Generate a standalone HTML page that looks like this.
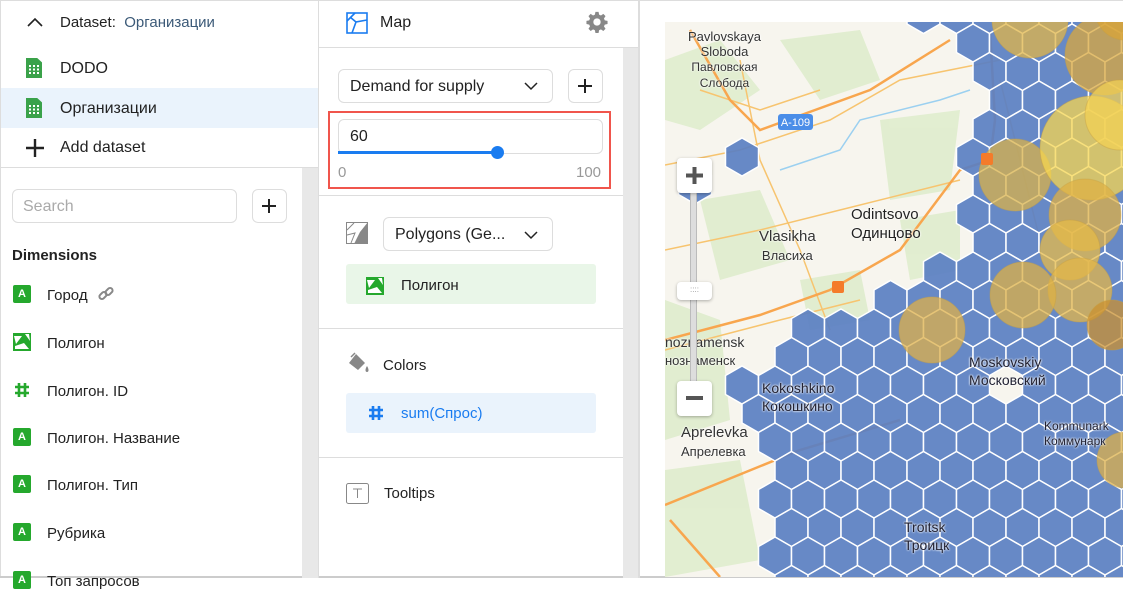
<!DOCTYPE html>
<html><head><meta charset="utf-8"><style>
*{box-sizing:border-box;margin:0;padding:0}
body{width:1123px;height:578px;overflow:hidden;background:#fff;font-family:"Liberation Sans","DejaVu Sans",sans-serif;color:#222;position:relative;font-size:15px}
.abs{position:absolute}
.row{position:absolute;left:0;display:flex;align-items:center}
.row span{position:relative;top:1px}
.sheet{width:16px;height:20px;background:#3aa24a;clip-path:polygon(0 0,70% 0,100% 22%,100% 100%,0 100%);position:relative}
.sheet:after{content:"";position:absolute;left:3px;top:7px;width:10px;height:9px;background:repeating-linear-gradient(90deg,#fff 0 2px,transparent 2px 4px);-webkit-mask:repeating-linear-gradient(0deg,#000 0 2px,transparent 2px 3.5px)}
.A{width:18px;height:18px;background:#25a82d;border-radius:2px;color:#fff;font-size:11px;font-weight:bold;display:flex;align-items:center;justify-content:center}
.box{position:absolute;border:1px solid #ddd;border-radius:6px;background:#fff}
.lbl{position:absolute;font-size:15px;color:#333;white-space:nowrap;text-shadow:0 0 2px #fff,0 0 2px #fff}
</style></head><body>
<div class="abs" style="left:0;top:0;width:1123px;height:1px;background:#ddd"></div>
<div class="abs" style="left:0;top:0;width:1px;height:578px;background:#ddd"></div>
<div class="abs" style="left:0;top:576px;width:1123px;height:2px;background:#ccc"></div>

<svg class="abs" style="left:26px;top:16px" width="18" height="12"><path d="M2 10 L9 3 L16 10" fill="none" stroke="#222" stroke-width="1.6"/></svg>
<div class="abs" style="left:60px;top:14px;font-size:15px">Dataset:&nbsp; <span style="color:#3c5a78">Организации</span></div>
<div class="row" style="top:58px;height:20px"><div class="sheet" style="margin-left:26px"></div><span style="margin-left:18px;font-size:16px">DODO</span></div>
<div class="abs" style="left:1px;top:88px;width:317px;height:40px;background:#eaf3fc"></div>
<div class="row" style="top:98px;height:20px"><div class="sheet" style="margin-left:26px"></div><span style="margin-left:18px;font-size:16px">Организации</span></div>
<svg class="abs" style="left:25px;top:138px" width="20" height="20"><path d="M10 1V19M1 10H19" stroke="#222" stroke-width="2.4"/></svg>
<div class="abs" style="left:60px;top:139px;font-size:16px">Add dataset</div>
<div class="abs" style="left:1px;top:167px;width:317px;height:1px;background:#ddd"></div>
<div class="abs" style="left:302px;top:168px;width:16px;height:410px;background:#e8e8e8"></div>
<div class="box" style="left:12px;top:189px;width:225px;height:34px"></div>
<div class="abs" style="left:23px;top:198px;color:#aaa;font-size:16px">Search</div>
<div class="box" style="left:252px;top:189px;width:35px;height:34px"></div>
<svg class="abs" style="left:262px;top:199px" width="14" height="14"><path d="M7 0V14M0 7H14" stroke="#222" stroke-width="2"/></svg>
<div class="abs" style="left:12px;top:247px;font-weight:bold;font-size:15px">Dimensions</div>
<div class="row" style="top:285px;height:18px"><div class="A" style="margin-left:13px">A</div><span style="margin-left:16px">Город</span>
<svg style="margin-left:10px" width="16" height="16"><g fill="none" stroke="#888" stroke-width="2"><rect x="1" y="7" width="8" height="5" rx="2.5" transform="rotate(-45 5 9.5)"/><rect x="7" y="3" width="8" height="5" rx="2.5" transform="rotate(-45 11 5.5)"/></g></svg></div>
<div class="row" style="top:333px;height:18px"><svg style="margin-left:13px" width="18" height="18"><rect width="18" height="18" fill="#25a82d"/><path d="M1 3H9L3 11ZM12 1H16L17 8ZM2 13L11 10L16 16H2Z" fill="#fff"/></svg><span style="margin-left:16px">Полигон</span></div>
<div class="row" style="top:381px;height:18px"><svg style="margin-left:13px" width="18" height="18"><path d="M6 2V16M12 2V16M2 6H16M2 12H16" stroke="#25a82d" stroke-width="2.6"/></svg><span style="margin-left:16px">Полигон. ID</span></div>
<div class="row" style="top:428px;height:18px"><div class="A" style="margin-left:13px">A</div><span style="margin-left:16px">Полигон. Название</span></div>
<div class="row" style="top:475px;height:18px"><div class="A" style="margin-left:13px">A</div><span style="margin-left:16px">Полигон. Тип</span></div>
<div class="row" style="top:523px;height:18px"><div class="A" style="margin-left:13px">A</div><span style="margin-left:16px">Рубрика</span></div>
<div class="row" style="top:571px;height:18px"><div class="A" style="margin-left:13px">A</div><span style="margin-left:16px">Топ запросов</span></div>

<div class="abs" style="left:318px;top:0;width:1px;height:578px;background:#ddd"></div>
<svg class="abs" style="left:346px;top:12px" width="22" height="22"><g fill="none" stroke="#1a7cf0" stroke-width="1.6"><rect x="1" y="1" width="20" height="20"/><path d="M1 9L9 1M6 21L10 10L21 8M10 10L4 5"/></g></svg>
<div class="abs" style="left:380px;top:14px;font-size:16px">Map</div>
<svg class="abs" style="left:586px;top:11px" width="22" height="22" viewBox="0 0 24 24"><path fill="#888" d="M10.3 1h3.4l.6 3 2 .9 2.6-1.7 2.4 2.4-1.7 2.6.9 2 3 .6v3.4l-3 .6-.9 2 1.7 2.6-2.4 2.4-2.6-1.7-2 .9-.6 3h-3.4l-.6-3-2-.9-2.6 1.7-2.4-2.4 1.7-2.6-.9-2-3-.6v-3.4l3-.6.9-2-1.7-2.6 2.4-2.4 2.6 1.7 2-.9zM12 8a4 4 0 100 8 4 4 0 000-8z"/></svg>
<div class="abs" style="left:319px;top:47px;width:319px;height:1px;background:#ddd"></div>
<div class="abs" style="left:623px;top:48px;width:16px;height:530px;background:#e8e8e8"></div>
<div class="abs" style="left:638px;top:0;width:2px;height:578px;background:#ddd"></div>
<div class="box" style="left:338px;top:69px;width:215px;height:34px"></div>
<div class="abs" style="left:350px;top:78px;font-size:16px">Demand for supply</div>
<svg class="abs" style="left:524px;top:82px" width="14" height="9"><path d="M1 1L7 7L13 1" fill="none" stroke="#222" stroke-width="1.5"/></svg>
<div class="box" style="left:568px;top:69px;width:35px;height:34px"></div>
<svg class="abs" style="left:578px;top:79px" width="14" height="14"><path d="M7 0V14M0 7H14" stroke="#222" stroke-width="2"/></svg>
<div class="abs" style="left:328px;top:111px;width:283px;height:78px;border:2px solid #f0554c"></div>
<div class="box" style="left:338px;top:119px;width:265px;height:35px"></div>
<div class="abs" style="left:350px;top:128px;font-size:16px">60</div>
<div class="abs" style="left:338px;top:151px;width:160px;height:3px;background:#1a7cf0"></div>
<div class="abs" style="left:491px;top:146px;width:13px;height:13px;border-radius:50%;background:#1a7cf0"></div>
<div class="abs" style="left:338px;top:164px;color:#999;font-size:15px">0</div>
<div class="abs" style="left:576px;top:164px;color:#999;font-size:15px">100</div>
<div class="abs" style="left:319px;top:195px;width:304px;height:1px;background:#ddd"></div>
<svg class="abs" style="left:346px;top:222px" width="22" height="22"><rect x=".5" y=".5" width="21" height="21" fill="#fff" stroke="#888"/><path d="M22 0V22H8L14 10Z" fill="#888"/><path d="M1 8L8 1M5 21L9 11L1 13" fill="none" stroke="#888"/></svg>
<div class="box" style="left:383px;top:217px;width:170px;height:34px"></div>
<div class="abs" style="left:395px;top:226px;font-size:16px">Polygons (Ge...</div>
<svg class="abs" style="left:524px;top:231px" width="14" height="9"><path d="M1 1L7 7L13 1" fill="none" stroke="#222" stroke-width="1.5"/></svg>
<div class="abs" style="left:346px;top:264px;width:250px;height:40px;background:#e9f6e8;border-radius:3px"></div>
<svg class="abs" style="left:366px;top:277px" width="18" height="18"><rect width="18" height="18" fill="#25a82d"/><path d="M1 3H9L3 11ZM12 1H16L17 8ZM2 13L11 10L16 16H2Z" fill="#fff"/></svg>
<div class="abs" style="left:401px;top:277px;font-size:15px">Полигон</div>
<div class="abs" style="left:319px;top:328px;width:304px;height:1px;background:#ddd"></div>
<svg class="abs" style="left:346px;top:352px" width="24" height="22"><path d="M10 2L19 11L12 18L3 11Z" fill="#888"/><path d="M9 1L5 5" stroke="#888" stroke-width="1.5"/><path d="M21 14C23 17 23 20 21 20S19 17 21 14Z" fill="#888"/></svg>
<div class="abs" style="left:383px;top:357px;font-size:15px">Colors</div>
<div class="abs" style="left:346px;top:393px;width:250px;height:40px;background:#eaf3fc;border-radius:3px"></div>
<svg class="abs" style="left:368px;top:405px" width="16" height="16"><path d="M5 1V15M11 1V15M1 5H15M1 11H15" stroke="#1a7cf0" stroke-width="2.6"/></svg>
<div class="abs" style="left:401px;top:405px;font-size:15px;color:#1a7cf0">sum(Спрос)</div>
<div class="abs" style="left:319px;top:457px;width:304px;height:1px;background:#ddd"></div>
<svg class="abs" style="left:346px;top:483px" width="23" height="21"><rect x=".5" y=".5" width="22" height="20" rx="2" fill="none" stroke="#888"/><path d="M7 6H16M11.5 6V15" stroke="#888"/></svg>
<div class="abs" style="left:384px;top:485px;font-size:15px">Tooltips</div>

<svg class="abs" style="left:665px;top:22px" width="458" height="555" viewBox="665 22 458 555">
<rect x="665" y="22" width="458" height="555" fill="#f7f5ee"/>
<g fill="#dfedcd" opacity=".9">
<path d="M665 60L720 40L760 90L700 130L665 120Z"/><path d="M780 40L860 30L880 80L820 100Z"/><path d="M700 200L760 190L790 260L720 280Z"/><path d="M800 280L860 270L870 320L810 330Z"/><path d="M665 300L720 320L730 420L665 440Z"/><path d="M665 470L740 460L760 560L665 577Z"/><path d="M880 120L960 110L950 190L890 200Z"/><path d="M900 220L960 210L960 270L910 280Z"/>
</g>
<g fill="none" stroke="#f7c46f" stroke-width="1.5">
<path d="M665 165L740 150L830 120L900 80L1000 60"/><path d="M700 90L760 110L820 90"/><path d="M665 250L760 230L840 210L960 180"/><path d="M740 60L760 160L800 250L830 330"/><path d="M665 350L780 320L860 300"/><path d="M1000 80L1020 160L1040 240"/>
</g>
<g fill="none" stroke="#f8a64e" stroke-width="2.5">
<path d="M690 30L730 100L760 130L870 90L950 40"/><path d="M665 340L760 315L830 290L900 250L960 170L990 160"/><path d="M665 505L800 450L900 420"/><path d="M670 520L720 577"/><path d="M990 30L995 120L990 160"/>
</g>
<g fill="none" stroke="#9bd0f0" stroke-width="1.5"><path d="M780 170L840 150L860 120L940 100L970 90"/></g>
<g id="hex" fill="#5a7fc2" fill-opacity=".92" stroke="#fff" stroke-width="1.5"></g>
<g stroke="#c9a040" stroke-opacity=".4" fill-opacity=".75">
<circle cx="1030" cy="20" r="38" fill="#e0b548"/>
<circle cx="1105" cy="55" r="40" fill="#d9a83e"/>
<circle cx="1015" cy="175" r="36" fill="#d8b24a"/>
<circle cx="1092" cy="148" r="52" fill="#f5d650"/>
<circle cx="1120" cy="115" r="35" fill="#f1d055"/>
<circle cx="1085" cy="215" r="36" fill="#deb045"/>
<circle cx="1070" cy="250" r="30" fill="#e6bb4a"/>
<circle cx="1080" cy="290" r="32" fill="#e2b54a"/>
<circle cx="1023" cy="295" r="33" fill="#dcb046"/>
<circle cx="932" cy="330" r="33" fill="#ddb04a"/>
<circle cx="1112" cy="325" r="25" fill="#c99030"/>
<circle cx="1125" cy="460" r="28" fill="#dcb04a"/>
<circle cx="1125" cy="10" r="30" fill="#d8a43a"/>
</g>
<rect x="778" y="114" width="35" height="16" rx="3" fill="#4b8ee8"/>
<text x="795.5" y="126" font-size="11" fill="#fff" text-anchor="middle" font-family="Liberation Sans">A-109</text>
<rect x="981" y="153" width="12" height="12" rx="2" fill="#f47b2a"/>
<rect x="832" y="281" width="12" height="12" rx="2" fill="#f47b2a"/>
</svg>
<div class="lbl" style="left:688px;top:29px;font-size:13px;line-height:15px;text-align:center">Pavlovskaya<br>Sloboda<br><span style="font-size:12px">Павловская<br>Слобода</span></div>
<div class="lbl" style="left:851px;top:205px;font-size:15px;line-height:19px;color:#222">Odintsovo<br>Одинцово</div>
<div class="lbl" style="left:759px;top:227px;font-size:15px;line-height:19px;text-align:center">Vlasikha<br><span style="font-size:13px">Власиха</span></div>
<div class="lbl" style="left:665px;top:333px;font-size:14px;line-height:18px">noznamensk<br><span style="font-size:13px">нознаменск</span></div>
<div class="lbl" style="left:762px;top:379px;font-size:14px;line-height:18px;color:#223">Kokoshkino<br>Кокошкино</div>
<div class="lbl" style="left:681px;top:423px;font-size:15px;line-height:19px">Aprelevka<br><span style="font-size:13px">Апрелевка</span></div>
<div class="lbl" style="left:969px;top:353px;font-size:14px;line-height:18px;color:#223">Moskovskiy<br>Московский</div>
<div class="lbl" style="left:904px;top:518px;font-size:14px;line-height:18px;color:#223">Troitsk<br>Троицк</div>
<div class="lbl" style="left:1044px;top:419px;font-size:12px;line-height:15px;color:#223">Kommunark<br>Коммунарк</div>
<div class="abs" style="left:690px;top:190px;width:7px;height:195px;background:#ddd;border-left:1px solid #bbb;border-right:1px solid #bbb"></div>
<div class="abs" style="left:677px;top:158px;width:35px;height:35px;background:#fff;border-radius:4px;box-shadow:0 1px 3px rgba(0,0,0,.3)"></div>
<svg class="abs" style="left:685px;top:166px" width="19" height="19"><path d="M9.5 1V18M1 9.5H18" stroke="#555" stroke-width="4"/></svg>
<div class="abs" style="left:677px;top:282px;width:35px;height:18px;background:#fff;border-radius:4px;box-shadow:0 1px 3px rgba(0,0,0,.3);font-size:8px;color:#999;text-align:center;line-height:16px">::::</div>
<div class="abs" style="left:677px;top:381px;width:35px;height:35px;background:#fff;border-radius:4px;box-shadow:0 1px 3px rgba(0,0,0,.3)"></div>
<div class="abs" style="left:686px;top:396px;width:17px;height:4px;background:#555"></div>
<script>
(function(){
var g=document.getElementById('hex'),r=19,dx=33,dy=28.5,out='';
var pts=[[0,900],[60,960],[100,975],[250,960],[290,880],[330,800],[380,740],[420,735],[470,760],[578,775],[600,780]];
function minX(y){for(var i=0;i<pts.length-1;i++){if(y>=pts[i][0]&&y<=pts[i+1][0]){var t=(y-pts[i][0])/(pts[i+1][0]-pts[i][0]);return pts[i][1]+t*(pts[i+1][1]-pts[i][1]);}}return 780;}
function hex(cx,cy){var s='';for(var k=0;k<6;k++){var a=Math.PI/180*(60*k-90);s+=(cx+r*Math.cos(a)).toFixed(1)+','+(cy+r*Math.sin(a)).toFixed(1)+' ';}return '<polygon points="'+s+'"/>';}
for(var j=-6;j<16;j++){var cy=157+dy*j;for(var i=-3;i<14;i++){var cx=742+dx*i+((j%2+2)%2?16.5:0);
if(cx>minX(cy)&&cy>10){ if(Math.abs(cx-1005)<20&&Math.abs(cy-385)<20)continue; out+=hex(cx,cy);}}}
out+=hex(742,157)+hex(695,185);
g.innerHTML=out;
})();
</script>
</body></html>
